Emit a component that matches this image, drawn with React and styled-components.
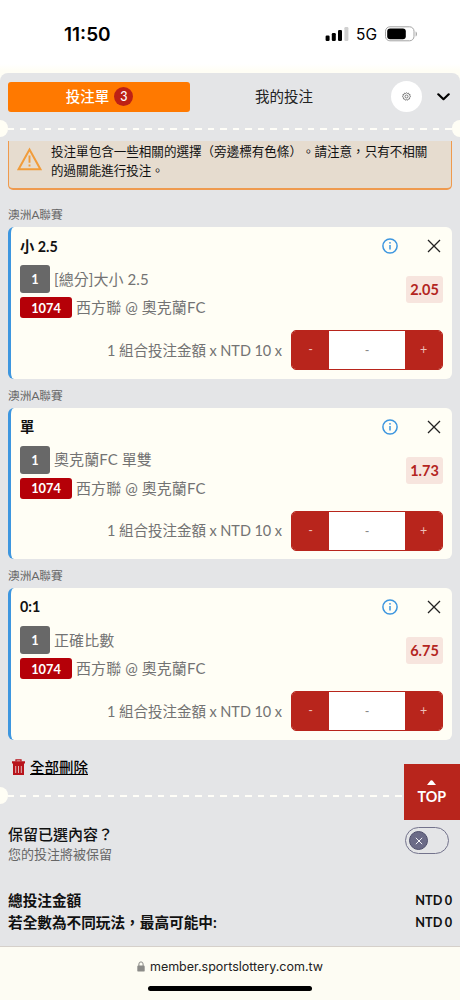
import React from "react";
import styled, { createGlobalStyle } from "styled-components";

const bets = [
  { title: "小 2.5", market: "[總分]大小 2.5", odds: "2.05" },
  { title: "單", market: "奧克蘭FC 單雙", odds: "1.73" },
  { title: "0:1", market: "正確比數", odds: "6.75" },
];

function StatusBar() {
  return (
    <Status>
      <Clock>11:50</Clock>
      <Signals>
        <svg width="24" height="14" viewBox="0 0 24 14">
          <rect x="0.6" y="8.5" width="4" height="5.5" rx="1.2" />
          <rect x="6.8" y="6" width="4" height="8" rx="1.2" />
          <rect x="13" y="3" width="4" height="11" rx="1.2" />
          <rect x="19.4" y="0" width="4" height="14" rx="1.2" fill="#d0d0d0" />
        </svg>
        <Network>5G</Network>
        <svg width="33" height="16" viewBox="0 0 33 16">
          <rect
            x="0.5"
            y="0.8"
            width="28.5"
            height="14"
            rx="4.4"
            fill="none"
            stroke="#a3a3a3"
          />
          <rect x="2.2" y="2.4" width="18.6" height="10.8" rx="3" />
          <path d="M30.6 5.4c1.8.6 1.8 4.4 0 5z" fill="#a3a3a3" />
        </svg>
      </Signals>
    </Status>
  );
}

function Perforation() {
  return (
    <Divider>
      <Notch />
      <Dashes />
      <Notch $right />
    </Divider>
  );
}

function BetCard({ title, market, odds }) {
  return (
    <>
      <League>澳洲A聯賽</League>
      <Card>
        <CardHead>
          <CardTitle>{title}</CardTitle>
          <CardIcons>
            <svg width="16" height="16" viewBox="0 0 16 16" fill="none">
              <circle cx="8" cy="8" r="7.1" stroke="#3d96df" strokeWidth="1.5" />
              <circle cx="8" cy="4.8" r="0.9" fill="#3d96df" />
              <path d="M8 6.9v4.5" stroke="#3d96df" strokeWidth="1.5" />
            </svg>
            <svg width="14" height="14" viewBox="0 0 14 14">
              <path d="M1 1l12 12M13 1L1 13" stroke="#222" strokeWidth="1.3" />
            </svg>
          </CardIcons>
        </CardHead>
        <CardInfo>
          <Lines>
            <Line $height={28}>
              <Tag $width={30} $color="#686868">
                1
              </Tag>
              <LineText>{market}</LineText>
            </Line>
            <Line $height={21}>
              <Tag $width={52} $color="#b50008">
                1074
              </Tag>
              <LineText>西方聯 @ 奧克蘭FC</LineText>
            </Line>
          </Lines>
          <Odds>{odds}</Odds>
        </CardInfo>
        <Stake>
          <StakeLabel>1 組合投注金額 x NTD 10 x</StakeLabel>
          <Stepper>
            <StepButton>-</StepButton>
            <Amount>-</Amount>
            <StepButton>+</StepButton>
          </Stepper>
        </Stake>
      </Card>
    </>
  );
}

function App() {
  return (
    <Page lang="zh-Hant">
      <GlobalStyle />
      <StatusBar />
      <Slip>
        <Tabs>
          <Tab $active>
            <TabText>投注單</TabText>
            <Count>3</Count>
          </Tab>
          <Tab>
            <TabText>我的投注</TabText>
          </Tab>
          <Settings>
            <svg width="9" height="9" viewBox="0 0 24 24" fill="none" stroke="#444" strokeWidth="1.7">
              <path d="M12 1.5l2.2 2.6 3.2-1.2 1 3.4 3.4.9-1 3.2 2 2.6-2.8 2 .2 3.4-3.4.4-1.6 3-3.2-1.3-3.2 1.3-1.6-3-3.4-.4.2-3.4-2.8-2 2-2.6-1-3.2 3.4-.9 1-3.4 3.2 1.2z" />
              <circle cx="12" cy="12" r="4" />
            </svg>
          </Settings>
          <svg width="13" height="8" viewBox="0 0 13 8" fill="none">
            <path d="M1.3 1.3l5.2 4.9 5.2-4.9" stroke="#000" strokeWidth="2.2" strokeLinecap="round" strokeLinejoin="round" />
          </svg>
        </Tabs>
        <Perforation />
        <Scroll>
          <Warning>
            <svg width="25" height="24" viewBox="0 0 25 24" fill="none" stroke="#f19c3b">
              <path d="M12.5 2.6L23.4 22.2H1.6z" strokeWidth="2" />
              <path d="M12.5 8.6v7.2M12.5 17.4v2" strokeWidth="1.9" />
            </svg>
            <WarningText>
              <div>投注單包含一些相關的選擇（旁邊標有色條）。請注意，只有不相關</div>
              <div>的過關能進行投注。</div>
            </WarningText>
          </Warning>
          {bets.map((bet) => (
            <BetCard key={bet.title} {...bet} />
          ))}
          <DeleteAll>
            <svg width="13" height="16" viewBox="0 0 13 16" fill="none">
              <path d="M4 2.4V.8h5v1.6" stroke="#b8141c" strokeWidth="1.3" />
              <path d="M0 2.3h13v2.2H0zM1 4.5h11V16H1z" fill="#b8141c" />
              <path d="M3.7 7v7M6.5 7v7M9.3 7v7" stroke="#e5c8ca" strokeWidth="0.9" />
            </svg>
            <DeleteText>全部刪除</DeleteText>
          </DeleteAll>
        </Scroll>
        <Perforation />
        <Keep>
          <div>
            <KeepTitle>保留已選內容？</KeepTitle>
            <KeepNote>您的投注將被保留</KeepNote>
          </div>
          <Toggle>
            <Knob>
              <svg width="8" height="8" viewBox="0 0 8 8">
                <path d="M.8.8l6.4 6.4M7.2.8L.8 7.2" stroke="#f4f4f8" strokeWidth="1" />
              </svg>
            </Knob>
          </Toggle>
        </Keep>
        <Totals>
          <Total>
            <span>總投注金額</span>
            <Money>NTD 0</Money>
          </Total>
          <Total>
            <span>若全數為不同玩法，最高可能中:</span>
            <Money>NTD 0</Money>
          </Total>
        </Totals>
        <TopButton>
          <svg width="9" height="5" viewBox="0 0 9 5">
            <path d="M0 5L3.6.6q.9-.9 1.8 0L9 5z" fill="#fff" />
          </svg>
          TOP
        </TopButton>
      </Slip>
      <Browser>
        <Address>
          <svg width="8" height="11" viewBox="0 0 8 11">
            <rect x="0.3" y="4.6" width="7.4" height="6" rx="1.2" fill="#8b8b88" />
            <path d="M1.9 5V3a2.1 2.1 0 014.2 0v2" fill="none" stroke="#8b8b88" strokeWidth="1" />
          </svg>
          <Url>member.sportslottery.com.tw</Url>
        </Address>
        <HomeBar />
      </Browser>
    </Page>
  );
}

export default App;

const GlobalStyle = createGlobalStyle`
  * {
    box-sizing: border-box;
  }
  body {
    margin: 0;
    background: #fffef5;
  }
  svg {
    display: block;
    flex-shrink: 0;
  }
`;
const Page = styled.div`
  width: 460px;
  height: 1000px;
  overflow: hidden;
  display: flex;
  flex-direction: column;
  background: #fffef5;
  color: #111;
  font-family: Lato, "Noto Sans CJK TC", sans-serif;
  white-space: nowrap;
  text-spacing-trim: space-all;
`;
const Status = styled.div`
  height: 73px;
  display: flex;
  justify-content: space-between;
  align-items: flex-start;
  padding: 22px 42px 0 64px;
  background: linear-gradient(#fff 64px, #fffef5 71px);
  font-family: Inter, sans-serif;
  color: #000;
`;
const Clock = styled.div`
  font-size: 19px;
  line-height: 25px;
  font-weight: 600;
`;
const Signals = styled.div`
  display: flex;
  align-items: center;
  height: 24px;
`;
const Network = styled.div`
  font-size: 15.5px;
  font-weight: 400;
  margin: 1px 8px 0 7px;
`;
const Slip = styled.div`
  position: relative;
  height: 873px;
  display: flex;
  flex-direction: column;
  background: #e4e5e7;
  border-radius: 8px 8px 0 0;
`;
const Tabs = styled.div`
  display: flex;
  align-items: center;
  height: 47px;
  padding: 0 10px 0 8px;
`;
const Tab = styled.div`
  display: flex;
  align-items: center;
  justify-content: center;
  width: ${({ $active }) => ($active ? 182 : 187)}px;
  height: 30px;
  border-radius: 3px;
  background: ${({ $active }) => ($active ? "#ff7900" : "none")};
  color: ${({ $active }) => ($active ? "#fff" : "#222")};
  font-size: 14.5px;
  font-weight: ${({ $active }) => ($active ? 500 : 400)};
`;
const TabText = styled.div`
  padding: 0 0 2px 1px;
`;
const Count = styled.div`
  width: 19px;
  height: 19px;
  margin-left: 5px;
  border-radius: 50%;
  background: #bd2115;
  font-size: 12.5px;
  line-height: 19px;
  text-align: center;
`;
const Settings = styled.div`
  display: flex;
  align-items: center;
  justify-content: center;
  width: 31px;
  height: 31px;
  margin: 0 15px 0 14px;
  border-radius: 50%;
  background: #fff;
`;
const Divider = styled.div`
  display: flex;
  align-items: center;
  height: 17px;
  flex-shrink: 0;
`;
const Notch = styled.div`
  width: 8px;
  height: 17px;
  background: #fffef5;
  border-radius: ${({ $right }) => ($right ? "9px 0 0 9px" : "0 9px 9px 0")};
`;
const Dashes = styled.div`
  flex: 1;
  height: 2px;
  background: repeating-linear-gradient(
    90deg,
    #fffef8 0 6px,
    transparent 6px 12.5px
  );
`;
const Scroll = styled.div`
  height: 646px;
  flex-shrink: 0;
  margin-top: 4px;
  padding: 0 8px;
  display: flex;
  flex-direction: column;
  overflow: hidden;
`;
const Warning = styled.div`
  display: flex;
  height: 49px;
  flex-shrink: 0;
  padding: 6px 0 0 8px;
  margin-bottom: 12px;
  background: #e6dccf;
  border: solid #ef9a4e;
  border-width: 0 1px 2px 1px;
  border-radius: 0 0 5px 5px;
`;
const WarningText = styled.div`
  margin: -5px 0 0 9px;
  font-size: 12.55px;
  line-height: 19px;
`;
const League = styled.div`
  height: 25px;
  flex-shrink: 0;
  font-size: 11.7px;
  line-height: 24px;
  color: #666;
`;
const Card = styled.div`
  height: 151.5px;
  flex-shrink: 0;
  margin-bottom: 4px;
  padding: 10px 9px 0 9px;
  background: #fffef5;
  border-left: 3px solid #3d96df;
  border-radius: 6px;
`;
const CardHead = styled.div`
  display: flex;
  align-items: center;
  justify-content: space-between;
  height: 18px;
`;
const CardTitle = styled.div`
  padding-bottom: 2px;
  font-size: 14.3px;
  font-weight: 700;
`;
const CardIcons = styled.div`
  display: flex;
  align-items: center;
  gap: 29px;
  padding-right: 2px;
`;
const CardInfo = styled.div`
  display: flex;
  justify-content: space-between;
  padding-top: 10px;
`;
const Lines = styled.div`
  display: flex;
  flex-direction: column;
  gap: 4px;
`;
const Line = styled.div`
  display: flex;
  align-items: center;
  gap: 4px;
  height: ${({ $height }) => $height}px;
`;
const LineText = styled.div`
  padding-bottom: 2px;
  font-size: 15px;
  letter-spacing: 0.08px;
  color: #737373;
`;
const Tag = styled.div`
  display: flex;
  align-items: center;
  justify-content: center;
  width: ${({ $width }) => $width}px;
  height: 100%;
  border-radius: 3px;
  background: ${({ $color }) => $color};
  color: #fff;
  font-size: 12.8px;
  font-weight: 700;
`;
const Odds = styled.div`
  width: 37px;
  height: 27px;
  margin-top: 11px;
  border-radius: 3px;
  background: #f7e5de;
  color: #b3251f;
  font-size: 14.5px;
  font-weight: 700;
  line-height: 27px;
  text-align: center;
`;
const Stake = styled.div`
  display: flex;
  align-items: center;
  justify-content: flex-end;
  gap: 9px;
  margin-top: 12px;
`;
const StakeLabel = styled.div`
  padding-bottom: 2px;
  font-size: 14.5px;
  word-spacing: -0.2px;
  color: #737373;
`;
const Stepper = styled.div`
  display: flex;
  width: 152px;
  height: 40px;
  overflow: hidden;
  border: 1px solid #b8251c;
  border-radius: 5px;
`;
const StepButton = styled.div`
  width: 37px;
  background: #b8251c;
  color: #ecc0bb;
  font-size: 12.5px;
  line-height: 38px;
  text-align: center;
`;
const Amount = styled.div`
  flex: 1;
  background: #fff;
  color: #888;
  font-size: 12.5px;
  line-height: 39px;
  text-align: center;
`;
const DeleteAll = styled.div`
  display: flex;
  align-items: center;
  height: 46px;
  flex-shrink: 0;
  padding-left: 4px;
  gap: 5px;
`;
const DeleteText = styled.div`
  padding-bottom: 1px;
  font-size: 14.5px;
  font-weight: 500;
  color: #000;
  text-decoration: underline;
`;
const Keep = styled.div`
  display: flex;
  justify-content: space-between;
  padding: 20px 11px 0 8px;
`;
const KeepTitle = styled.div`
  font-size: 15px;
  line-height: 20px;
  font-weight: 500;
`;
const KeepNote = styled.div`
  font-size: 13px;
  line-height: 20px;
  color: #666;
`;
const Toggle = styled.div`
  width: 44px;
  height: 27px;
  margin-top: 3px;
  padding: 3px;
  border: 1px solid #73738c;
  border-radius: 14px;
`;
const Knob = styled.div`
  display: flex;
  align-items: center;
  justify-content: center;
  width: 19px;
  height: 19px;
  border-radius: 50%;
  background: #6b6b87;
  border: 1px solid #4f4f6c;
`;
const Totals = styled.div`
  padding: 26px 8px 0;
`;
const Total = styled.div`
  display: flex;
  justify-content: space-between;
  height: 22px;
  line-height: 22px;
  font-size: 14.65px;
  font-weight: 700;
`;
const Money = styled.div`
  margin-top: -1px;
  font-size: 12.7px;
  word-spacing: -0.8px;
`;
const TopButton = styled.div`
  position: absolute;
  right: 0;
  top: 691px;
  width: 56.5px;
  height: 56px;
  display: flex;
  flex-direction: column;
  align-items: center;
  padding-top: 16px;
  gap: 2px;
  background: #b8251c;
  color: #fff;
  font-size: 14.3px;
  font-weight: 700;
  line-height: 20px;
`;
const Browser = styled.div`
  flex: 1;
  display: flex;
  flex-direction: column;
  align-items: center;
  border-top: 1px solid #d5d0ca;
  background: #fdfcf3;
`;
const Address = styled.div`
  display: flex;
  align-items: center;
  gap: 5px;
  height: 18px;
  margin-top: 10px;
`;
const Url = styled.div`
  font-family: Inter, sans-serif;
  font-size: 12.5px;
  color: #222;
`;
const HomeBar = styled.div`
  width: 164px;
  height: 5px;
  margin-top: 11px;
  border-radius: 3px;
  background: #000;
`;
